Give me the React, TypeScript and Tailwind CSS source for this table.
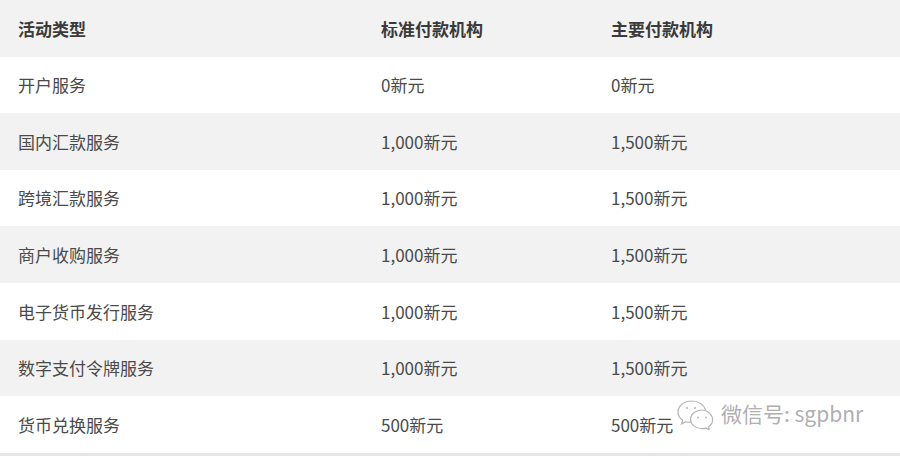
import React from "react";

const rows: [string, string, string][] = [
    ["开户服务", "0新元", "0新元"],
    ["国内汇款服务", "1,000新元", "1,500新元"],
    ["跨境汇款服务", "1,000新元", "1,500新元"],
    ["商户收购服务", "1,000新元", "1,500新元"],
    ["电子货币发行服务", "1,000新元", "1,500新元"],
    ["数字支付令牌服务", "1,000新元", "1,500新元"],
    ["货币兑换服务", "500新元", "500新元"],
];

function WeChatMark() {
    return (
        <svg width="42" height="32" viewBox="0 0 42 32" fill="none" stroke="#b5b5b5" strokeWidth="1.2">
            {/* back bubble */}
            <path d="M17 3C9 3 3 8 3 14c0 3.4 1.8 6.3 4.7 8.3L6.5 26l4.3-2.3c1.6 .5 3.2 .7 5 .7" fill="#fff" />
            <circle cx="12" cy="10" r="1" fill="#b5b5b5" stroke="none" />
            <circle cx="20" cy="10" r="1" fill="#b5b5b5" stroke="none" />
            <path d="M17 3c6.5 0 12 3.8 13.5 9" />
            {/* front bubble */}
            <path
                d="M27 12c-6.4 0-11.5 4.2-11.5 9.3S20.6 30.6 27 30.6c1.3 0 2.6-.2 3.8-.5l3.6 1.9-.9-3.1c2.5-1.7 4.1-4.2 4.1-7.1 0-5.1-5.2-9.8-10.6-9.8z"
                fill="#fff"
            />
            <circle cx="23" cy="19.5" r="0.9" fill="#b5b5b5" stroke="none" />
            <circle cx="31" cy="19.5" r="0.9" fill="#b5b5b5" stroke="none" />
        </svg>
    );
}

export default function App() {
    return (
        <div
            className="relative w-[900px] h-[456px] bg-white overflow-hidden text-[17px] text-[#4a4a4a]"
            style={{ fontFamily: '"Noto Sans CJK SC", "Noto Sans", sans-serif' }}
        >
            <div className="grid grid-cols-[363px_230px_1fr] h-[56.6px] items-center bg-[#f2f2f2] font-bold text-[#3a3a3a]">
                <div className="pl-[18px]">活动类型</div>
                <div className="pl-[18px]">标准付款机构</div>
                <div className="pl-[18px]">主要付款机构</div>
            </div>
            {rows.map((r, i) => (
                <div
                    key={r[0]}
                    className={
                        "grid grid-cols-[363px_230px_1fr] h-[56.6px] items-center " +
                        (i % 2 === 0 ? "bg-white" : "bg-[#f2f2f2]")
                    }
                >
                    <div className="pl-[18px]">{r[0]}</div>
                    <div className="pl-[18px]">{r[1]}</div>
                    <div className="pl-[18px]">{r[2]}</div>
                </div>
            ))}
            <div className="h-[3px] bg-[#e6e6e6]" />

            <div className="absolute left-[675px] top-[398px] flex items-center gap-[4px] text-[#b0b0b0] text-[21px]">
                <WeChatMark />
                <span style={{ textShadow: "0 0 2px #fff, 0 0 2px #fff" }}>微信号: sgpbnr</span>
            </div>
        </div>
    );
}
